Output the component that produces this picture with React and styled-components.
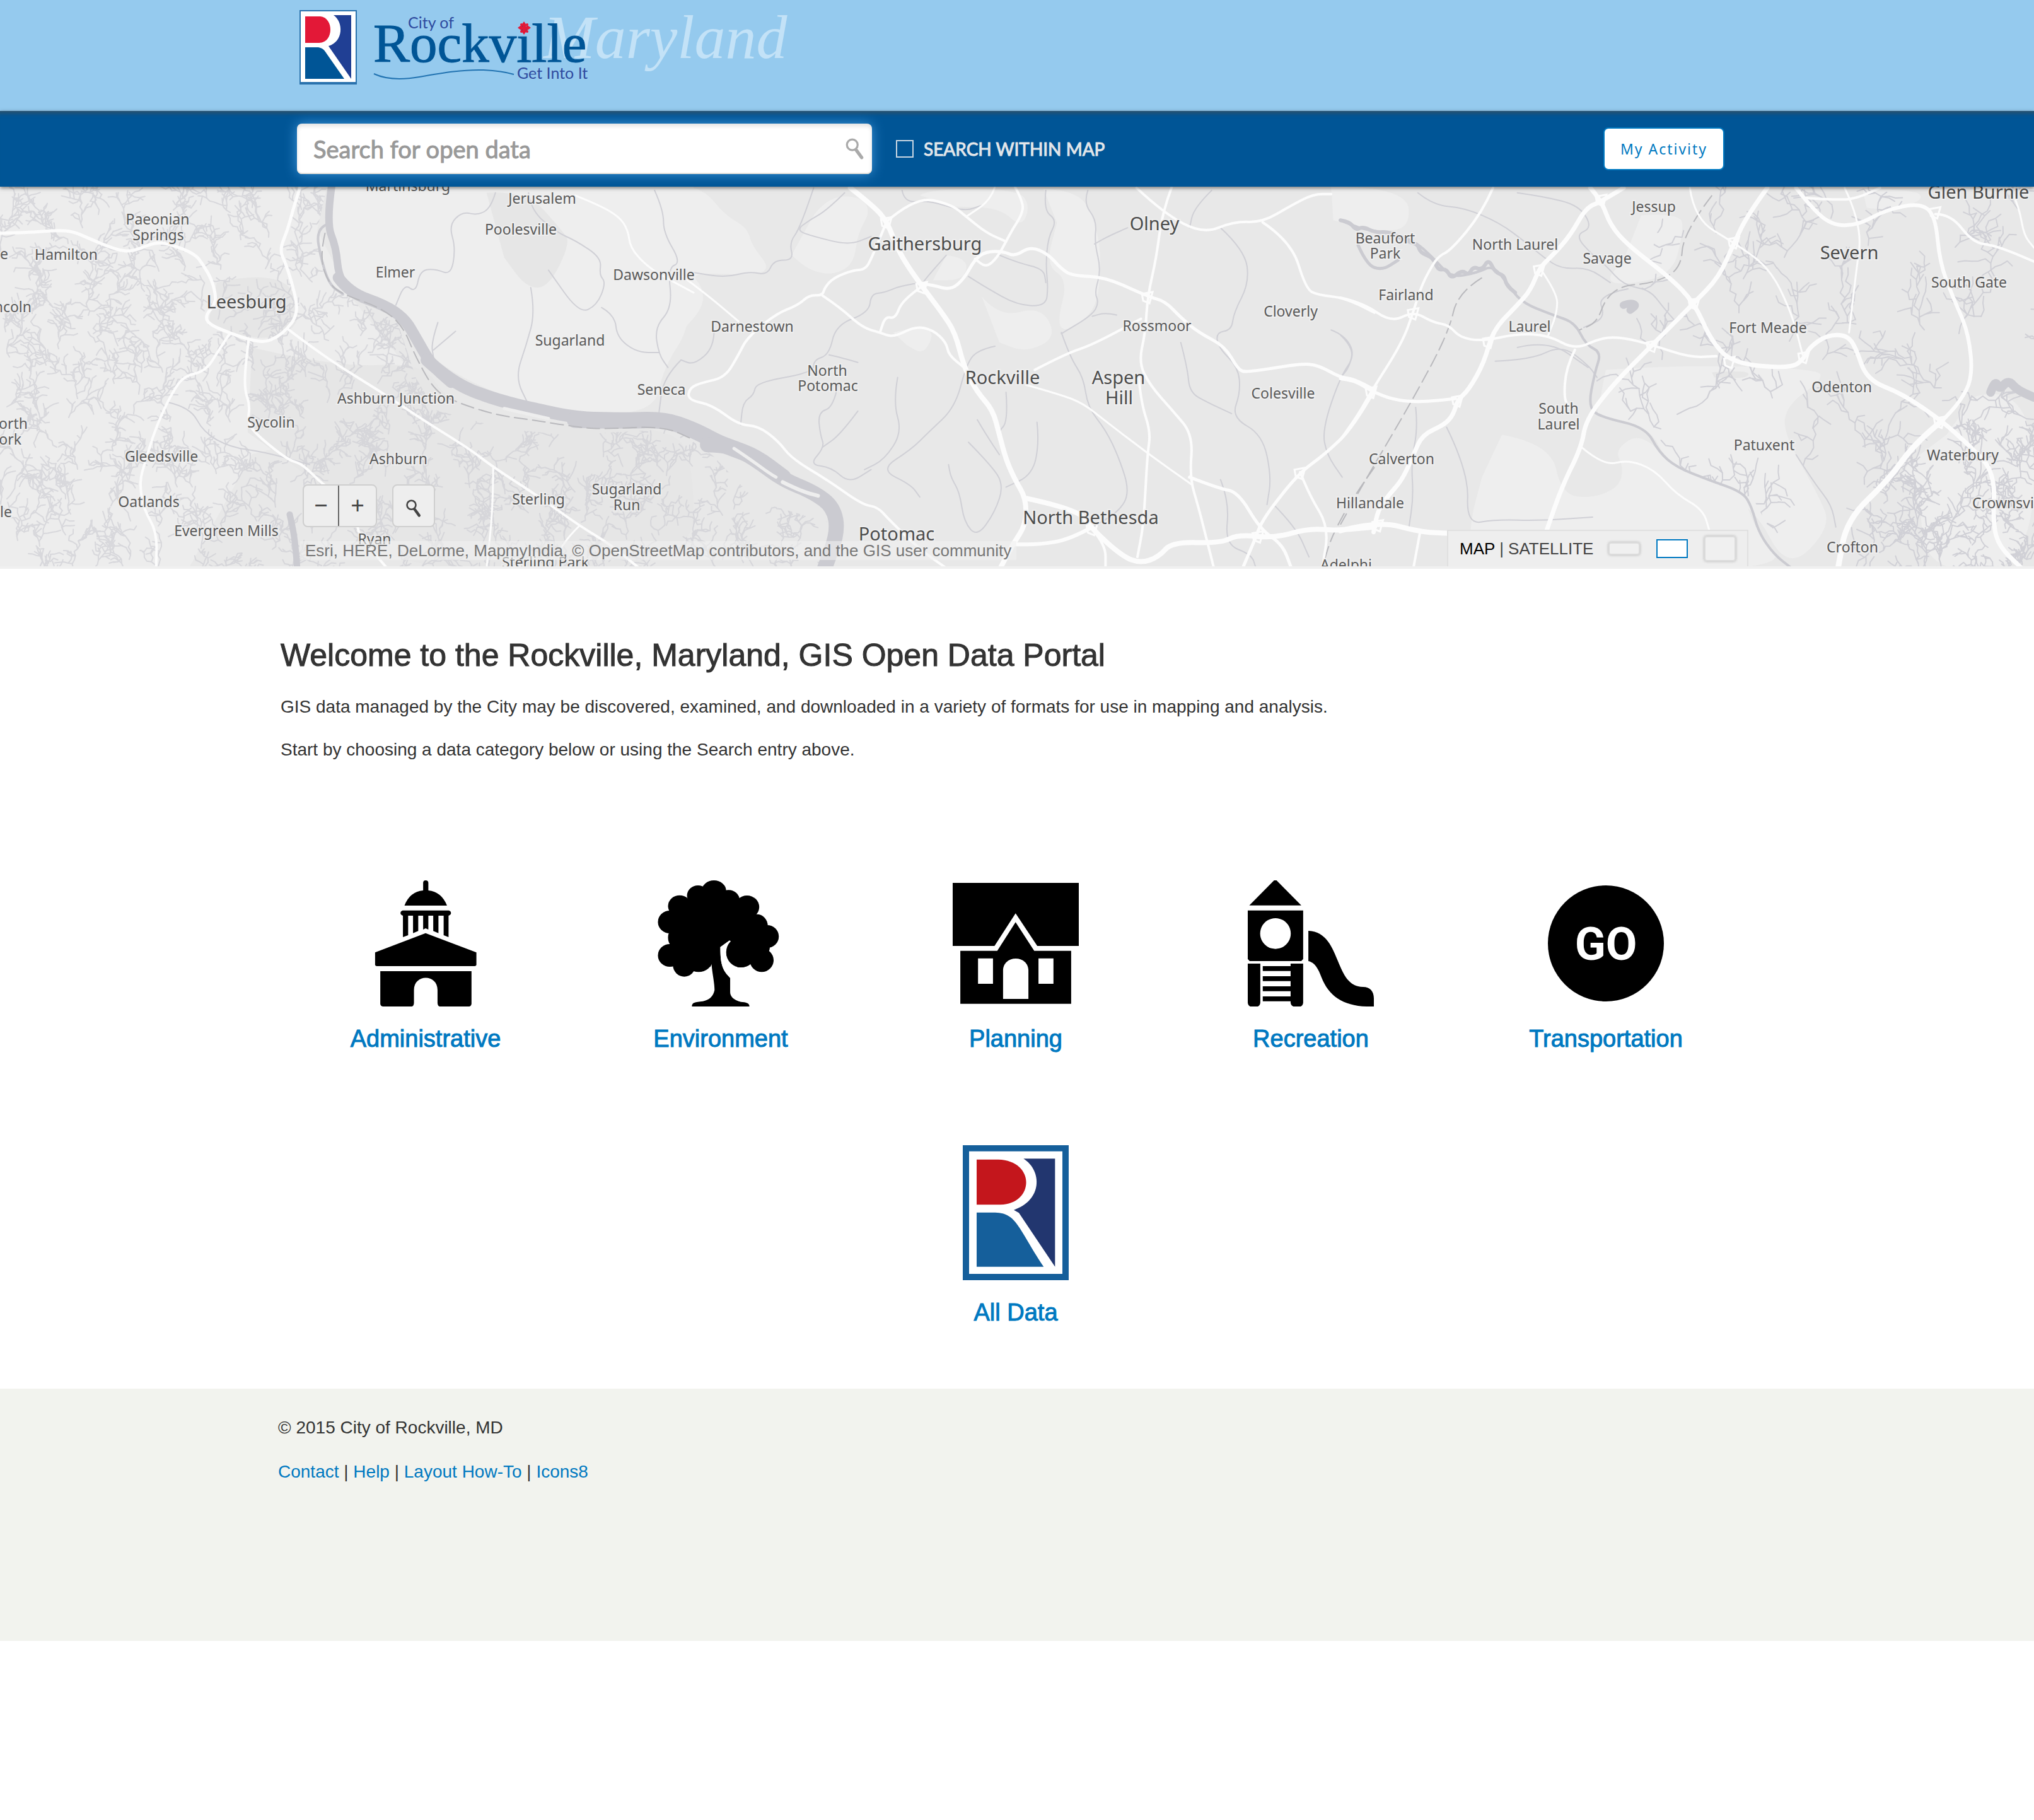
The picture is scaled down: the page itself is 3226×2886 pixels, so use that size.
import React from "react";
import styled, { createGlobalStyle } from "styled-components";

const SANS = '"Liberation Sans", Arial, sans-serif';
const HUMANIST = 'Lato, "Open Sans", sans-serif';
const LINK = "#0079c1";

const GlobalStyle = createGlobalStyle`
  *, *::before, *::after { box-sizing: border-box; }
  body { margin: 0; background: #fff; color: #333; font-family: ${SANS}; font-size: 28px; line-height: 40px; }
  h1, p { margin: 0; }
`;

const Container = styled.div`
  width: 100%;
  max-width: 2344px;
  margin: 0 auto;
`;

/* ---------- banner ---------- */

const Banner = styled.header`
  background: #95caee;
  height: 176px;
`;

const BannerInner = styled(Container)`
  padding-left: 34px;
`;

const LogoLink = styled.a`
  display: inline-block;
`;

const LogoArt = styled.svg`
  display: block;
  width: 800px;
  height: 160px;
`;

const ScriptWord = styled.text`
  font: italic 98px "Liberation Serif", serif;
  fill: #c3e2f7;
`;

const LogoName = styled.text`
  font: 87px "Liberation Serif", serif;
  fill: #005596;
  stroke: #005596;
  stroke-width: 1px;
`;

const LogoSmall = styled.text`
  font: 25px ${HUMANIST};
  fill: #2f4b9f;
`;

function CityLogo() {
  return (
    <LogoArt viewBox="475 0 800 160" role="img" aria-label="City of Rockville, Maryland">
      <ScriptWord x="862" y="92">Maryland</ScriptWord>
      <rect x="476" y="17" width="89" height="116" fill="#fff" stroke="#2a72ad" strokeWidth="2" />
      <path d="M484 26H506C530 26 530 68 506 68H484Z" fill="#e31837" />
      <path d="M529 24H557V125L521 73C545 66 545 35 529 24Z" fill="#203f94" />
      <path d="M484 75H503C511 75 515 80 518 85L546 125H484Z" fill="#005596" />
      <path d="M475 132H566" stroke="#2a72ad" strokeWidth="4" />
      <LogoSmall x="647" y="45">City of</LogoSmall>
      <LogoName x="592" y="98">Rockville</LogoName>
      <g fill="#e31837">
        <path d="M831 34l5 7h-10zM831 55l5-7h-10zM821 44l7-5v10zM842 44l-7-5v10z" />
        <path d="M829 38h5v13h-5zM825 42h13v5h-13z" />
        <circle cx="827" cy="39" r="2" />
        <circle cx="836" cy="39" r="2" />
        <circle cx="827" cy="50" r="2" />
        <circle cx="836" cy="50" r="2" />
      </g>
      <path d="M593 117C612 126 636 127 665 122C705 115 735 110 767 111C788 112 802 114 815 118" fill="none" stroke="#2273b1" strokeWidth="2" />
      <LogoSmall x="820" y="125">Get Into It</LogoSmall>
    </LogoArt>
  );
}

/* ---------- navigation bar ---------- */

const NavBar = styled.nav`
  position: relative;
  z-index: 1;
  background: #005596;
  box-shadow: inset 0 10px 6px -6px rgba(60, 80, 90, 0.7), 0 2px 6px rgba(0, 0, 0, 0.5);
`;

const NavInner = styled(Container)`
  display: flex;
  align-items: center;
  height: 120px;
  padding: 0 50px 0 30px;
`;

const SearchForm = styled.form`
  display: flex;
  align-items: center;
  flex: 0 1 912px;
  height: 80px;
  border-radius: 8px;
  background: #fff;
  box-shadow: inset 0 4px 6px rgba(0, 0, 0, 0.12), inset 0 -2px 0 #e8e4de, 0 0 20px #3d94d8;
`;

const SearchInput = styled.input`
  flex: 1;
  min-width: 0;
  height: 76px;
  padding: 0 0 0 26px;
  border: 0;
  outline: 0;
  background: transparent;
  color: #333;
  font: 38px ${HUMANIST};
  &::placeholder { color: #999; opacity: 1; -webkit-text-stroke: 1px #999; }
`;

const IconButton = styled.button`
  display: flex;
  align-items: center;
  justify-content: center;
  width: 54px;
  height: 76px;
  padding: 0;
  border: 0;
  background: transparent;
  color: #aaa;
  cursor: pointer;
`;

const WithinMap = styled.label`
  display: flex;
  align-items: center;
  gap: 16px;
  margin-left: 38px;
  color: #e2e6ea;
  font: 28px ${HUMANIST};
  -webkit-text-stroke: 1px #e2e6ea;
`;

const Tick = styled.input`
  appearance: none;
  width: 28px;
  height: 28px;
  margin: 0;
  border: 2px solid #c9d6e2;
`;

const ActivityButton = styled.button`
  width: 192px;
  height: 68px;
  margin-left: auto;
  padding: 0;
  border: 2px solid ${LINK};
  border-radius: 8px;
  background: #fff;
  color: ${LINK};
  font: 23px "Noto Sans", sans-serif;
  letter-spacing: 2px;
`;

function Magnifier({ size }) {
  return (
    <svg width={size} height={size} viewBox="0 0 32 32" fill="none" stroke="currentColor" aria-hidden="true">
      <circle cx="12" cy="10" r="8" strokeWidth="3" />
      <path d="M18 18L26 29" strokeWidth="5" strokeLinecap="round" />
    </svg>
  );
}

/* ---------- map drawing ---------- */

const MAP_W = 3226;
const MAP_TOP = 296;
const MAP_H = 602;

const SHEETS = {
  west: { x: 0, y: 290 },
  mid: { x: 1080, y: 290 },
  east: { x: 2126, y: 290 },
};
const toMap = (sheet, x, y) => [sheet.x + x / 1.4255, sheet.y + y / 2.529];

function curve(sheetName, text) {
  const n = text.split(" ").map(Number);
  const pts = [];
  for (let i = 0; i < n.length; i += 2) pts.push(toMap(SHEETS[sheetName], n[i], n[i + 1]));
  let d = `M${pts[0][0].toFixed(1)} ${pts[0][1].toFixed(1)}`;
  for (let i = 1; i < pts.length - 1; i++) {
    const mx = (pts[i][0] + pts[i + 1][0]) / 2;
    const my = (pts[i][1] + pts[i + 1][1]) / 2;
    d += `Q${pts[i][0].toFixed(1)} ${pts[i][1].toFixed(1)} ${mx.toFixed(1)} ${my.toFixed(1)}`;
  }
  const last = pts[pts.length - 1];
  return `${d}L${last[0].toFixed(1)} ${last[1].toFixed(1)}`;
}

function randomSource(seed) {
  let s = seed;
  return () => {
    s = (s * 1664525 + 1013904223) % 4294967296;
    return s / 4294967296;
  };
}

function streams(seed, box, spacing, reach) {
  const rnd = randomSource(seed);
  let d = "";
  const walk = (x, y, heading, steps, depth) => {
    d += `M${x.toFixed(0)} ${y.toFixed(0)}`;
    const forks = [];
    for (let i = 0; i < steps; i++) {
      const a = heading + (rnd() - 0.5) * 1.7;
      x += Math.cos(a) * reach;
      y += Math.sin(a) * reach;
      d += `L${x.toFixed(1)} ${y.toFixed(1)}`;
      if (depth > 0 && rnd() < 0.6) forks.push([x, y, heading + (rnd() < 0.5 ? -1 : 1) * (0.5 + rnd() * 0.5)]);
    }
    forks.forEach((f) => walk(f[0], f[1], f[2], 2 + Math.floor(rnd() * 2), depth - 1));
  };
  for (let gy = box[1]; gy < box[3]; gy += spacing) {
    for (let gx = box[0]; gx < box[2]; gx += spacing) {
      walk(gx + rnd() * spacing, gy + rnd() * spacing, -Math.PI / 2 + (rnd() - 0.5) * 1.8, 9, 2);
    }
  }
  return d;
}

const WEST_STREAMS = streams(7, [0, 320, 1320, 940], 48, 7);
const EAST_STREAMS = streams(23, [2560, 330, 3240, 920], 100, 11);
const CORNER_STREAMS = streams(41, [2980, 730, 3240, 920], 44, 7);

const LIGHT = [
  ["west", "740 10 745 170 770 380 800 430 900 490 950 620 990 730 1150 870 1300 930 1480 920 1500 740 1568 560 1568 10"],
  ["mid", "0 10 50 20 100 130 150 180 160 250 205 350 150 370 20 360 50 420 50 500 0 600"],
  ["mid", "300 130 330 60 400 50 430 110 400 200 390 330 340 370 290 350 250 290"],
  ["mid", "540 50 560 25 760 25 790 90 770 180 720 100 620 95"],
  ["mid", "680 455 720 540 815 495 850 620 780 680 720 640"],
  ["mid", "820 25 905 25 945 200 950 370 935 520 870 600 850 560 875 390 825 330 850 160"],
  ["mid", "480 600 520 580 575 590 550 690 510 650"],
  ["mid", "600 290 650 300 640 390 570 390"],
  ["mid", "1470 15 1640 15 1650 190 1560 190 1475 150"],
  ["east", "680 130 770 120 775 200 750 370 640 410 600 390 640 310"],
  ["east", "365 1010 475 1045 500 1250 570 1265 630 1220 640 1140 620 1070 680 1000 760 1150 910 1240 940 1400 1020 1560 300 1560 290 1380 320 1180"],
  ["east", "600 750 760 730 1080 745 1090 790 1010 890 1000 1000 1080 1250 1110 1380 1010 1560 930 1280 740 1130 700 980 580 930"],
  ["east", "1430 860 1568 780 1568 1560 1320 1560 1310 1230 1250 1170 1370 1010"],
  ["east", "1180 25 1300 25 1320 70 1240 110 1190 100"],
];

const DARK = [
  ["west", "1100 40 1190 30 1270 190 1290 240 1240 420 1190 420 1140 300"],
  ["west", "490 400 640 340 690 560 600 640 470 570"],
  ["west", "570 660 760 740 960 720 1010 880 1200 960 1520 980 1568 1120 1568 1560 860 1560 740 1230 560 1000"],
  ["east", "840 760 925 750 920 785 845 780"],
];

const ROADS = [
  ["west", 5, "0 202 60 200 130 190 165 195 200 222 265 270 300 275 345 242 375 240 440 283 460 330 478 385 488 450 485 490 465 530 470 565 520 603 570 632 600 638 625 620 650 585 668 540 672 490 660 400 645 320 632 268 650 190 662 110 678 20"],
  ["west", 4, "520 603 495 670 465 755 415 775 390 840 365 930 345 1020 328 1120 315 1200 325 1310 355 1400 353 1545"],
  ["west", 4, "562 632 555 730 553 830 565 890 560 960 580 1010 650 1110 680 1125 708 1170 730 1210 800 1290 808 1380 815 1420 875 1545"],
  ["west", 4, "650 585 735 700 850 825 960 955 1060 1065 1115 1140 1220 1260 1310 1375 1380 1450 1445 1545"],
  ["west", 3, "1115 1140 1115 1300 1100 1545"],
  ["west", 3, "1310 1375 1290 1410 1270 1460"],
  ["west", 3, "1300 50 1350 85 1400 135 1420 190 1425 260 1460 330 1500 375 1568 440"],
  ["mid", 8, "383 20 440 100 465 155 480 220 500 300 545 415 590 520 620 600 640 740 670 840 705 910 720 1010 735 1110 755 1190 780 1265 780 1370 750 1450 722 1545"],
  ["mid", 4, "465 155 530 55 610 85 645 135 690 200 735 235"],
  ["mid", 3, "710 15 700 70 645 135"],
  ["mid", 4, "755 15 775 80 770 130 750 185 735 235 715 300 690 340 665 305"],
  ["mid", 4, "465 155 430 310 415 348 390 350 345 380 325 420 320 452 290 450 265 490 215 525 150 620 130 690 100 780 50 800 20 820 15 870 70 890 130 970 175 975 220 1035 250 1105 330 1190 410 1290 445 1300 470 1350 540 1470 600 1545"],
  ["mid", 4, "320 452 360 500 410 580 450 600 480 620 530 575 570 590 600 640 605 690 640 740"],
  ["mid", 4, "545 415 500 470 485 545 462 535 450 600"],
  ["mid", 5, "545 405 570 410 610 430 640 385 665 305 690 275 730 275 755 295 790 255 830 285 860 345 885 372 960 378 1055 455 1095 475 1130 540 1170 600 1230 655 1260 750 1280 760 1400 725 1440 730 1490 780 1520 785 1568 830"],
  ["mid", 4, "1110 15 1088 120 1075 300 1055 455 1050 600 1035 720 1060 810 1110 910 1158 1010 1150 1180 1170 1300 1190 1440 1205 1545"],
  ["mid", 4, "1030 20 1090 120 1180 205 1250 155 1315 158 1380 90 1430 45 1470 45"],
  ["mid", 4, "1315 158 1380 235 1413 425 1440 450 1500 460 1568 520"],
  ["mid", 4, "800 750 870 685 930 650 1040 545"],
  ["mid", 3, "780 810 860 850 910 885 960 955 1055 1085 1155 1210"],
  ["mid", 4, "1035 780 1040 880 1062 1000 1055 1085 1050 1240 1045 1380 1032 1500"],
  ["mid", 8, "780 1265 900 1310 930 1390 1000 1500 1040 1525 1080 1500 1110 1440 1220 1445 1260 1410 1340 1425 1420 1385 1480 1395 1568 1380"],
  ["mid", 6, "930 1380 880 1430 810 1450 755 1450"],
  ["mid", 4, "930 1390 960 1450 960 1545"],
  ["mid", 5, "1150 1180 1215 1225 1260 1240 1310 1390 1360 1450 1380 1545"],
  ["mid", 5, "1568 830 1520 980 1455 1090 1400 1160 1340 1290 1310 1370 1300 1420 1270 1545"],
  ["mid", 4, "1400 1160 1420 1250 1465 1380 1450 1545"],
  ["mid", 3, "0 370 60 450 130 555"],
  ["east", 7, "640 20 590 75 555 100 520 210 480 290 450 340 430 430 400 490 345 590 325 720 290 830 265 870 255 930 235 970 185 1010 165 1090 140 1190 110 1250 85 1310 75 1400"],
  ["east", 4, "345 20 320 120 250 270 220 295 195 370 180 430 165 515 140 640 70 835 40 930 0 1030"],
  ["east", 5, "0 785 30 790 70 835 120 870 180 880 260 865"],
  ["east", 4, "0 460 50 480 115 560 165 515 210 560 245 570 270 620 320 635 400 605 470 610 530 670 590 620 640 620 705 650 790 700 850 695"],
  ["east", 3, "450 340 490 440 490 520 470 610"],
  ["east", 4, "530 670 510 740 505 870 520 900"],
  ["east", 7, "565 20 590 70 610 170 650 250 745 380 800 480 840 640 890 725 1020 745 1050 700 1060 660 1100 610 1145 610 1165 660 1190 790 1270 845 1360 955 1420 1050 1480 1160 1475 1370 1490 1460 1540 1545"],
  ["east", 7, "965 20 920 130 890 240 855 380 800 480 705 650 615 810 555 950 545 1060 500 1220 465 1400"],
  ["east", 3, "790 20 800 145 890 240 970 340 1020 520 1045 690"],
  ["east", 6, "1030 20 1060 90 1110 170 1170 170 1230 110 1310 80 1345 130 1355 320 1385 460 1420 600 1430 780 1400 880 1360 955"],
  ["east", 3, "1140 20 1180 170 1165 370 1150 600"],
  ["east", 4, "1345 125 1380 125 1430 240 1480 250 1568 315"],
  ["east", 4, "1050 60 1130 70 1170 60 1220 20"],
  ["east", 3, "1515 20 1535 100 1545 210 1568 260"],
  ["east", 9, "1360 955 1300 1040 1240 1190 1145 1350 1125 1545"],
  ["east", 3, "545 1060 595 1135 650 1110 710 1150 760 1250 820 1310 835 1400"],
  ["east", 8, "0 1395 85 1355 180 1400 240 1405"],
  ["east", 4, "180 1400 165 1545"],
];

const INTERCHANGES = [
  ["mid", 465, 155], ["mid", 545, 415], ["mid", 1055, 455], ["mid", 930, 1385], ["mid", 1305, 1415], ["mid", 1400, 1160],
  ["east", 590, 65], ["east", 450, 345], ["east", 165, 520], ["east", 70, 835], ["east", 265, 870], ["east", 335, 635],
  ["east", 800, 480], ["east", 705, 650], ["east", 890, 235], ["east", 1345, 115], ["east", 1355, 955], ["east", 85, 1370],
  ["east", 1048, 695], ["east", 880, 715],
];

const CREEKS = [
  ["west", "1120 40 1110 100 1080 130 1045 115 1015 170 1030 260 1020 370 985 345 950 350 940 440 915 405 895 490"],
  ["west", "1195 40 1200 110 1260 200 1300 230 1360 300 1355 370 1370 400 1350 490 1310 525 1240 350"],
  ["west", "1480 30 1500 110 1500 200 1540 320 1510 340 1520 500 1480 580 1490 690 1510 740"],
  ["west", "1200 420 1210 520 1190 650 1165 780 1195 890"],
  ["west", "1360 500 1390 530 1395 620 1440 680 1490 680"],
  ["west", "990 560 975 640 980 700"],
  ["west", "1030 595 980 670"],
  ["west", "1540 710 1500 780 1490 920"],
  ["west", "380 880 430 900 460 1000 520 1060 600 1080 700 1130"],
  ["mid", "300 20 270 180 245 240 255 310 210 310 195 370 155 355 100 380 30 360"],
  ["mid", "370 40 330 110 290 150 260 190 300 215 380 250 430 215"],
  ["mid", "545 400 500 410 460 440 430 445 425 520 350 570 335 690 300 710 300 760 170 800 165 850 140 880 135 970"],
  ["mid", "600 290 560 370 545 405"],
  ["mid", "825 30 820 110 850 150 830 220 825 330 830 420 825 495 760 490 690 420 650 375"],
  ["mid", "720 290 760 320 820 345 825 400"],
  ["mid", "920 30 910 80 940 150 935 240 950 350 935 440 945 480 930 530 860 605"],
  ["mid", "1010 180 970 210 935 245"],
  ["mid", "1200 30 1160 100 1150 180"],
  ["mid", "500 30 505 80 560 70 640 115 680 90"],
  ["mid", "860 600 880 700 910 780 920 900 960 990 990 1100 1015 1240 990 1320 920 1390"],
  ["mid", "985 530 960 520 930 535"],
  ["mid", "1220 180 1275 270 1285 400 1250 520 1245 590 1210 600 1215 660 1260 740 1265 840 1245 940 1315 1010 1335 1180 1325 1290"],
  ["mid", "1130 640 1145 740 1150 840 1190 880 1245 925"],
  ["mid", "1470 590 1500 610 1525 690 1490 780 1450 990 1460 1090 1495 1180"],
  ["mid", "490 780 480 880 500 1000 460 1110 415 1150"],
  ["mid", "710 655 670 670 645 730 620 900 560 1000 520 1070 450 1150 520 1210 540 1260"],
  ["mid", "355 810 345 900 310 920 315 1010 325 1060 290 1130 340 1140 380 1205 430 1150"],
  ["mid", "400 915 360 1010 320 1060"],
  ["mid", "400 720 360 700 335 690"],
  ["mid", "735 840 740 960 715 1000 730 1100"],
  ["mid", "670 950 690 1010 720 1090"],
  ["mid", "650 1040 700 1130 730 1210 710 1320 670 1420 640 1360 630 1240 610 1180 605 1130"],
  ["mid", "805 960 810 1040 795 1170 735 1220"],
  ["mid", "75 590 75 660 30 730 0 710"],
  ["mid", "1220 1190 1240 1280 1230 1450 1290 1490 1300 1545"],
  ["mid", "1340 1290 1390 1380 1420 1500"],
  ["east", "175 40 210 90 280 100 360 160 420 240 460 300 500 345 560 340 610 400"],
  ["east", "400 40 460 55 540 90 570 180 530 210 570 290 600 330 640 410 700 430 730 500 760 560"],
  ["east", "350 715 430 710 500 650 560 730 580 780"],
  ["east", "400 660 470 630 560 740"],
  ["east", "170 900 175 980 160 1120 165 1260 155 1380"],
  ["east", "240 980 290 1160 285 1370 350 1350 450 1355 570 1340"],
  ["east", "0 610 30 660 20 740 0 780"],
  ["east", "650 425 580 450 600 540 550 580"],
  ["east", "1030 1090 1070 1200 1110 1290 1120 1380"],
];

const PATUXENT = "0 150 40 180 70 190 160 220 215 310 250 380 310 360 345 330 380 410 410 480 480 530 530 560 555 650 590 680 575 760 560 900 590 940 690 980 720 1080 760 1140 830 1190 910 1240 930 1300 945 1400 980 1490 1020 1545";

const GORGE = "0 150 20 155 35 190 50 175 80 200 110 195 150 235 175 245 180 280 210 300 220 350 240 345 250 385 275 350 290 370 300 335 320 350 335 305 350 360 370 370 375 410 395 440";

const TOWNS = [
  [647, 294, "Martinsburg"], [860, 314, "Jerusalem"], [250, 347, "Paeonian"], [251, 372, "Springs"],
  [826, 363, "Poolesville"], [105, 403, "Hamilton"], [627, 431, "Elmer"], [1037, 435, "Dawsonville"],
  [904, 539, "Sugarland"], [1193, 517, "Darnestown"], [2197, 377, "Beaufort"], [2197, 401, "Park"],
  [2403, 387, "North Laurel"], [2549, 409, "Savage"], [2623, 327, "Jessup"], [2230, 467, "Fairland"],
  [2047, 493, "Cloverly"], [1835, 516, "Rossmoor"], [2426, 517, "Laurel"], [3123, 447, "South Gate"],
  [2804, 519, "Fort Meade"], [1312, 587, "North"], [1313, 611, "Potomac"], [2035, 623, "Colesville"],
  [1049, 617, "Seneca"], [628, 631, "Ashburn Junction"], [430, 669, "Sycolin"], [256, 723, "Gleedsville"],
  [632, 727, "Ashburn"], [236, 795, "Oatlands"], [359, 841, "Evergreen Mills"], [594, 854, "Ryan"],
  [854, 791, "Sterling"], [994, 775, "Sugarland"], [994, 800, "Run"], [865, 891, "Sterling Park"],
  [2223, 727, "Calverton"], [2173, 797, "Hillandale"], [2135, 895, "Adelphi"], [2472, 647, "South"],
  [2472, 672, "Laurel"], [2921, 613, "Odenton"], [2798, 705, "Patuxent"], [3113, 721, "Waterbury"],
  [2938, 867, "Crofton"],
];

const EDGE_TOWNS = [
  [13, 402, "end", "e"], [50, 486, "end", "Lincoln"], [44, 671, "end", "North"], [34, 696, "end", "Fork"],
  [19, 811, "end", "le"], [3128, 797, "start", "Crownsville"],
];

const CITIES = [
  [391, 477, "Leesburg"], [1467, 385, "Gaithersburg"], [1831, 353, "Olney"], [2933, 399, "Severn"],
  [3138, 303, "Glen Burnie"], [1590, 597, "Rockville"], [1774, 597, "Aspen"], [1775, 629, "Hill"],
  [1422, 845, "Potomac"], [1730, 819, "North Bethesda"],
];

const PlaceName = styled.text`
  font: ${(p) => (p.$city ? 29 : 23)}px "Noto Sans", "Open Sans", sans-serif;
  fill: ${(p) => (p.$city ? "#4c4c4c" : "#5a5a5a")};
  stroke: rgba(240, 240, 240, 0.8);
  stroke-width: 4px;
  paint-order: stroke;
  dominant-baseline: central;
`;

const MapDrawing = styled.svg`
  display: block;
  width: 100%;
  height: 602px;
`;

function BaseMap() {
  return (
    <MapDrawing viewBox={`0 ${MAP_TOP} ${MAP_W} ${MAP_H}`} preserveAspectRatio="xMidYMid slice" role="img" aria-label="Map of the Rockville area">
      <defs>
        <clipPath id="virginia">
          <path d="M0 290H520L503 365L515 450L560 475L630 510L660 600L690 650L800 680L900 690L1070 680L1130 722L1200 795L1320 830V900H0Z" />
        </clipPath>
        <clipPath id="arundel">
          <path d="M2650 290H3226V900H2840L2780 790L2640 735L2600 670L2530 655L2530 560L2600 470Z" />
        </clipPath>
      </defs>
      <rect x="0" y="290" width={MAP_W} height="620" fill="#e8e8e8" />
      <path d="M0 290H520L503 365L560 475L660 600L690 650L400 720L300 900H0Z" fill="#ededed" />
      {LIGHT.map(([s, p]) => <path key={p} d={`${curve(s, p)}Z`} fill="#eeeeee" />)}
      {DARK.map(([s, p]) => <path key={p} d={`${curve(s, p)}Z`} fill="#e6e6e6" />)}

      <g fill="none" stroke="#d0d0d6" strokeLinejoin="round" strokeLinecap="round">
        <path d={WEST_STREAMS} clipPath="url(#virginia)" strokeWidth="2" opacity="0.75" />
        <g clipPath="url(#arundel)" strokeWidth="2">
          <path d={EAST_STREAMS} />
          <path d={CORNER_STREAMS} />
        </g>
        {CREEKS.map(([s, p]) => <path key={p} d={curve(s, p)} strokeWidth="2" />)}
      </g>

      <g fill="none" stroke="#cbcbd1" strokeLinejoin="round" strokeLinecap="round">
        <path d={curve("west", "750 10 738 160 760 260 765 370 790 440 870 490")} strokeWidth="12" />
        <path d={curve("west", "765 380 790 440 870 490 915 545 940 620 975 730 1020 800")} strokeWidth="18" />
        <path d={curve("west", "965 710 1020 800 1120 870 1230 915 1300 940 1400 948 1500 945 1568 990")} strokeWidth="20" />
        <path d={curve("west", "1300 950 1400 955 1500 948 1568 990 1620 1040 1650 1060 1710 1100 1770 1180")} strokeWidth="26" />
        <path d={curve("mid", "60 1050 110 1050 170 1110 230 1190 300 1240 345 1300 355 1400 325 1545")} strokeWidth="24" />
        <path d={curve("west", "735 170 715 190 725 300 745 410 775 445")} strokeWidth="4" />
        <path d={curve("west", "655 1330 665 1400 672 1545")} strokeWidth="10" />
        <path d={curve("east", PATUXENT)} strokeWidth="4" />
        <path d={curve("east", GORGE)} strokeWidth="6" />
        <path d={curve("east", "40 250 60 330 95 350 130 310")} strokeWidth="5" />
        <path d={curve("east", "1470 840 1480 790 1490 830 1510 790 1530 830 1568 860")} strokeWidth="14" />
        <path d={curve("east", "640 490 655 480 670 490 655 510")} strokeWidth="12" />
      </g>
      <g fill="none" stroke="#eeeeee" strokeLinecap="round">
        <path d={curve("mid", "120 1065 150 1100 200 1165 215 1180")} strokeWidth="5" />
        <path d={curve("mid", "230 1200 270 1235 310 1255")} strokeWidth="6" />
        <path d={curve("west", "1140 905 1190 925 1240 945")} strokeWidth="5" />
      </g>
      <g fill="none" stroke="#b9b9bd" strokeWidth="2" strokeDasharray="22 7">
        <path d={curve("west", "735 200 722 300 745 410 780 450 860 500 910 570 940 700 985 840 1040 885 1120 930 1200 950 1300 978 1360 988 1500 975 1568 1030")} />
        <path d={curve("east", "320 380 265 440 245 600 160 880 60 1180 0 1370")} />
        <path d={curve("east", "840 50 775 200 770 350 700 405 640 410 600 460 580 560 540 590")} />
        <path d={curve("mid", "1568 1140 1520 1260 1470 1420 1450 1545")} />
      </g>

      <g fill="none" stroke="#fcfcfc" strokeLinejoin="round" strokeLinecap="round">
        {ROADS.map(([s, w, p]) => <path key={p} d={curve(s, p)} strokeWidth={w} />)}
      </g>
      <g fill="none" stroke="#fcfcfc" strokeWidth="3">
        {INTERCHANGES.map(([s, x, y]) => {
          const [cx, cy] = toMap(SHEETS[s], x, y);
          return <path key={`${s}${x}-${y}`} d={`M${cx - 9} ${cy - 4}L${cx + 8} ${cy - 7}L${cx + 3} ${cy + 11}L${cx - 7} ${cy + 7}Z`} />;
        })}
      </g>

      <g textAnchor="middle">
        {TOWNS.map(([x, y, name]) => <PlaceName key={`${name}${y}`} x={x} y={y}>{name}</PlaceName>)}
        {CITIES.map(([x, y, name]) => <PlaceName key={name} $city x={x} y={y}>{name}</PlaceName>)}
      </g>
      {EDGE_TOWNS.map(([x, y, anchor, name]) => (
        <PlaceName key={name} x={x} y={y} textAnchor={anchor}>{name}</PlaceName>
      ))}
    </MapDrawing>
  );
}

/* ---------- map controls ---------- */

const MapSection = styled.section`
  position: relative;
  border-bottom: 4px solid #f0f0f0;
`;

const MapOverlay = styled.div`
  position: absolute;
  inset: 0;
  display: flex;
  align-items: flex-end;
`;

const OverlayInner = styled(Container)`
  display: flex;
  align-items: flex-end;
  justify-content: space-between;
  padding: 0 12px 0 35px;
`;

const LeftTools = styled.div`
  display: flex;
  flex-direction: column;
  gap: 22px;
  margin-bottom: 10px;
`;

const ToolRow = styled.div`
  display: flex;
  gap: 24px;
  padding-left: 4px;
`;

const ToolGroup = styled.div`
  display: flex;
  height: 68px;
  border: 2px solid #cfcfcf;
  border-radius: 8px;
  background: #eeeeee;
`;

const ToolButton = styled.button`
  display: flex;
  align-items: center;
  justify-content: center;
  width: ${(p) => p.$width}px;
  padding: ${(p) => (p.$low ? "8px 0 0" : "0 0 4px")};
  border: 0;
  background: transparent;
  color: #444;
  font: 38px "Noto Sans", sans-serif;
  & + & { border-left: 2px solid #666; }
`;

const Attribution = styled.p`
  padding: 0 8px;
  background: rgba(240, 240, 240, 0.6);
  color: #777;
  font-size: 26px;
  line-height: 30px;
`;

const MapOptions = styled.div`
  display: flex;
  align-items: center;
  width: 478px;
  height: 58px;
  padding: 0 18px;
  border: 2px solid #e0e0e0;
  border-bottom: 0;
  background: #eeeeee;
  color: #444;
  font-size: 26px;
`;

const TextButton = styled.button`
  padding: 0;
  border: 0;
  background: transparent;
  color: ${(p) => (p.$active ? "#000" : "#444")};
  font: 26px ${SANS};
`;

const Divider = styled.span`
  margin: 0 7px;
`;

const SizeChoices = styled.div`
  display: flex;
  flex: 1;
  align-items: center;
  gap: 26px;
  justify-content: flex-end;
`;

const SizeButton = styled.button`
  width: 50px;
  height: ${(p) => p.$height}px;
  padding: 0;
  border: ${(p) => (p.$active ? "2px solid #0079c1" : "2px solid #dcdcdc")};
  border-radius: ${(p) => (p.$active ? 0 : 4)}px;
  background: ${(p) => (p.$active ? "#fff" : "#f0f0f0")};
  box-shadow: 0 0 4px rgba(0, 0, 0, ${(p) => (p.$active ? 0 : 0.25)});
`;

/* ---------- main content ---------- */

const Intro = styled.div`
  display: grid;
  gap: 28px;
  padding: 110px 4px 0;
`;

const Title = styled.h1`
  margin-bottom: 7px;
  font-size: 50px;
  font-weight: 500;
  line-height: 54px;
  -webkit-text-stroke: 1px #333;
`;

const DataSections = styled.section`
  padding-right: 4px;
`;

const Categories = styled.div`
  display: grid;
  grid-template-columns: repeat(5, 1fr);
  padding-top: 187px;
`;

const AllDataRow = styled.div`
  display: flex;
  justify-content: center;
  padding: 146px 0 98px;
`;

const CategoryLink = styled.a`
  display: flex;
  flex-direction: column;
  align-items: center;
  gap: 28px;
  color: ${LINK};
  font-size: 38px;
  line-height: 46px;
  text-decoration: none;
  -webkit-text-stroke: 1px ${LINK};
`;

const CategoryArt = styled.svg`
  width: ${(p) => p.$width}px;
  height: ${(p) => p.$height}px;
`;

const GoText = styled.text`
  font: bold 72px Roboto, "Liberation Sans", sans-serif;
  fill: #fff;
  -webkit-text-stroke: 0;
`;

const TREE_LEAVES = [
  [1222, 128, 40, 50], [1170, 150, 36, 48], [1270, 172, 36, 48], [1110, 200, 38, 51], [1330, 205, 40, 55],
  [1078, 276, 39, 54], [1362, 295, 36, 56], [1396, 345, 38, 54], [1110, 350, 38, 60], [1078, 435, 39, 54],
  [1125, 480, 37, 56], [1172, 460, 44, 54], [1310, 430, 48, 62], [1378, 458, 39, 56], [1360, 390, 45, 70],
];

const CATEGORIES = [
  {
    name: "Administrative",
    box: "72 78 412 600",
    art: (
      <>
        <path d="M270 90Q270 78 278 78Q287 78 287 90V126Q330 132 348 198H209Q226 132 270 126Z" />
        <path d="M203 221H354Q361 224 361 234Q361 242 353 246V348L337 339V246H320V329L303 319V246H287V312L278 306L270 312V246H254V319L237 329V246H221V339L204 348V246Q196 242 196 234Q196 224 203 221Z" />
        <path d="M278 329L444 421V478Q444 486 438 486H119Q113 486 113 478V421Z" />
        <path d="M130 510H428V666Q426 678 420 678H324Q318 676 317 662V600C317 522 240 522 240 600V662Q239 676 233 678H138Q131 676 130 666Z" />
      </>
    ),
  },
  {
    name: "Environment",
    box: "1038 78 412 600",
    art: (
      <>
        {TREE_LEAVES.map(([cx, cy, rx, ry]) => <ellipse key={`${cx}-${cy}`} cx={cx} cy={cy} rx={rx} ry={ry} />)}
        <path d="M1110 180L1200 130L1330 200L1390 350L1350 440L1273 364L1242 396L1210 490L1110 460L1080 290Z" />
        <path d="M1212 440L1215 490C1218 530 1224 570 1224 600C1220 630 1206 648 1186 653C1160 657 1150 658 1150 678H1338C1338 660 1326 658 1310 656C1286 648 1275 630 1275 610V542C1250 505 1243 480 1243 396L1225 390Z" />
        <path d="M1273 364L1243 396C1243 480 1250 505 1275 542L1300 485C1262 480 1250 400 1273 364Z" fill="#fff" />
        <ellipse cx="1310" cy="420" rx="48" ry="72" />
      </>
    ),
  },
  {
    name: "Planning",
    box: "105 78 413 600",
    art: (
      <>
        <path d="M105 90H518V390H382L311 235L242 390H105Z" />
        <path
          fillRule="evenodd"
          d="M311 277L372 413H493V665H130V413H251ZM188 449H237V570H188ZM386 449H435V570H386ZM270 642V505C272 432 351 432 353 505V642Z"
        />
      </>
    ),
  },
  {
    name: "Recreation",
    box: "1071 78 412 600",
    art: (
      <>
        <path d="M1157 78H1165L1246 197H1076Z" />
        <path fillRule="evenodd" d="M1071 221H1252V452L1246 462H1077L1071 452ZM1161 258A50 73 0 1 0 1162 258Z" />
        <path d="M1071 474H1112V660Q1111 674 1104 678H1079Q1072 674 1071 660Z" />
        <path d="M1120 486H1211V474H1252V660Q1251 674 1244 678H1220Q1212 674 1211 660V653H1120V630H1211V605H1120V582H1211V557H1120V534H1211V509H1120Z" />
        <path d="M1269 318C1380 325 1350 585 1448 585C1470 585 1483 605 1483 640V678H1460C1380 675 1335 625 1312 540C1302 500 1290 468 1269 462Z" />
      </>
    ),
  },
  {
    name: "Transportation",
    box: "0 0 200 200",
    art: (
      <>
        <circle cx="100" cy="100" r="92" />
        <GoText x="100" y="126" textAnchor="middle">GO</GoText>
      </>
    ),
  },
];

function RockvilleMark() {
  return (
    <CategoryArt $width={168} $height={214} viewBox="141 78 504 642" aria-hidden="true">
      <rect x="141" y="78" width="504" height="642" fill="#155f9b" />
      <rect x="171" y="107" width="444" height="583" fill="#fff" />
      <path d="M207 146H310C485 150 485 355 320 361H207Z" fill="#c4161c" />
      <path d="M430 142H580V656L408 400L384 386C520 340 520 200 430 142Z" fill="#22366f" />
      <path d="M207 398H295C350 400 375 420 400 455C430 495 480 590 526 656H207Z" fill="#155f9b" />
    </CategoryArt>
  );
}

/* ---------- footer ---------- */

const Footer = styled.footer`
  background: #f2f3ee;
`;

const FooterInner = styled(Container)`
  display: grid;
  gap: 30px;
  padding: 42px 0 248px;
`;

const FooterLink = styled.a`
  color: ${LINK};
  text-decoration: none;
`;

const FOOTER_LINKS = ["Contact", "Help", "Layout How-To", "Icons8"];

export default function App() {
  return (
    <>
      <GlobalStyle />
      <Banner>
        <BannerInner>
          <LogoLink href="#home">
            <CityLogo />
          </LogoLink>
        </BannerInner>
      </Banner>

      <NavBar>
        <NavInner>
          <SearchForm role="search" onSubmit={(e) => e.preventDefault()}>
            <SearchInput type="text" placeholder="Search for open data" aria-label="Search for open data" />
            <IconButton type="submit" aria-label="Search">
              <Magnifier size={34} />
            </IconButton>
          </SearchForm>
          <WithinMap htmlFor="within-map">
            <Tick type="checkbox" id="within-map" />
            SEARCH WITHIN MAP
          </WithinMap>
          <ActivityButton type="button">My Activity</ActivityButton>
        </NavInner>
      </NavBar>

      <MapSection>
        <BaseMap />
        <MapOverlay>
          <OverlayInner>
            <LeftTools>
              <ToolRow>
                <ToolGroup>
                  <ToolButton type="button" $width={54} aria-label="Zoom out">−</ToolButton>
                  <ToolButton type="button" $width={60} aria-label="Zoom in">+</ToolButton>
                </ToolGroup>
                <ToolGroup>
                  <ToolButton type="button" $width={64} $low aria-label="Find a place">
                    <Magnifier size={28} />
                  </ToolButton>
                </ToolGroup>
              </ToolRow>
              <Attribution>
                Esri, HERE, DeLorme, MapmyIndia, © OpenStreetMap contributors, and the GIS user community
              </Attribution>
            </LeftTools>
            <MapOptions>
              <TextButton type="button" $active>MAP</TextButton>
              <Divider>|</Divider>
              <TextButton type="button">SATELLITE</TextButton>
              <SizeChoices>
                <SizeButton type="button" $height={20} aria-label="Small map" />
                <SizeButton type="button" $height={30} $active aria-label="Medium map" />
                <SizeButton type="button" $height={40} aria-label="Large map" />
              </SizeChoices>
            </MapOptions>
          </OverlayInner>
        </MapOverlay>
      </MapSection>

      <Container as="main">
        <Intro>
          <Title>Welcome to the Rockville, Maryland, GIS Open Data Portal</Title>
          <p>GIS data managed by the City may be discovered, examined, and downloaded in a variety of formats for use in mapping and analysis.</p>
          <p>Start by choosing a data category below or using the Search entry above.</p>
        </Intro>
        <DataSections>
          <Categories>
            {CATEGORIES.map((c) => (
              <CategoryLink key={c.name} href={`#${c.name.toLowerCase()}`}>
                <CategoryArt $width={200} $height={200} viewBox={c.box} preserveAspectRatio="none" fill="#000" aria-hidden="true">
                  {c.art}
                </CategoryArt>
                {c.name}
              </CategoryLink>
            ))}
          </Categories>
          <AllDataRow>
            <CategoryLink href="#all">
              <RockvilleMark />
              All Data
            </CategoryLink>
          </AllDataRow>
        </DataSections>
      </Container>

      <Footer>
        <FooterInner>
          <p>© 2015 City of Rockville, MD</p>
          <p>
            {FOOTER_LINKS.map((name, i) => (
              <React.Fragment key={name}>
                {i > 0 && " | "}
                <FooterLink href={`#${name.toLowerCase()}`}>{name}</FooterLink>
              </React.Fragment>
            ))}
          </p>
        </FooterInner>
      </Footer>
    </>
  );
}
